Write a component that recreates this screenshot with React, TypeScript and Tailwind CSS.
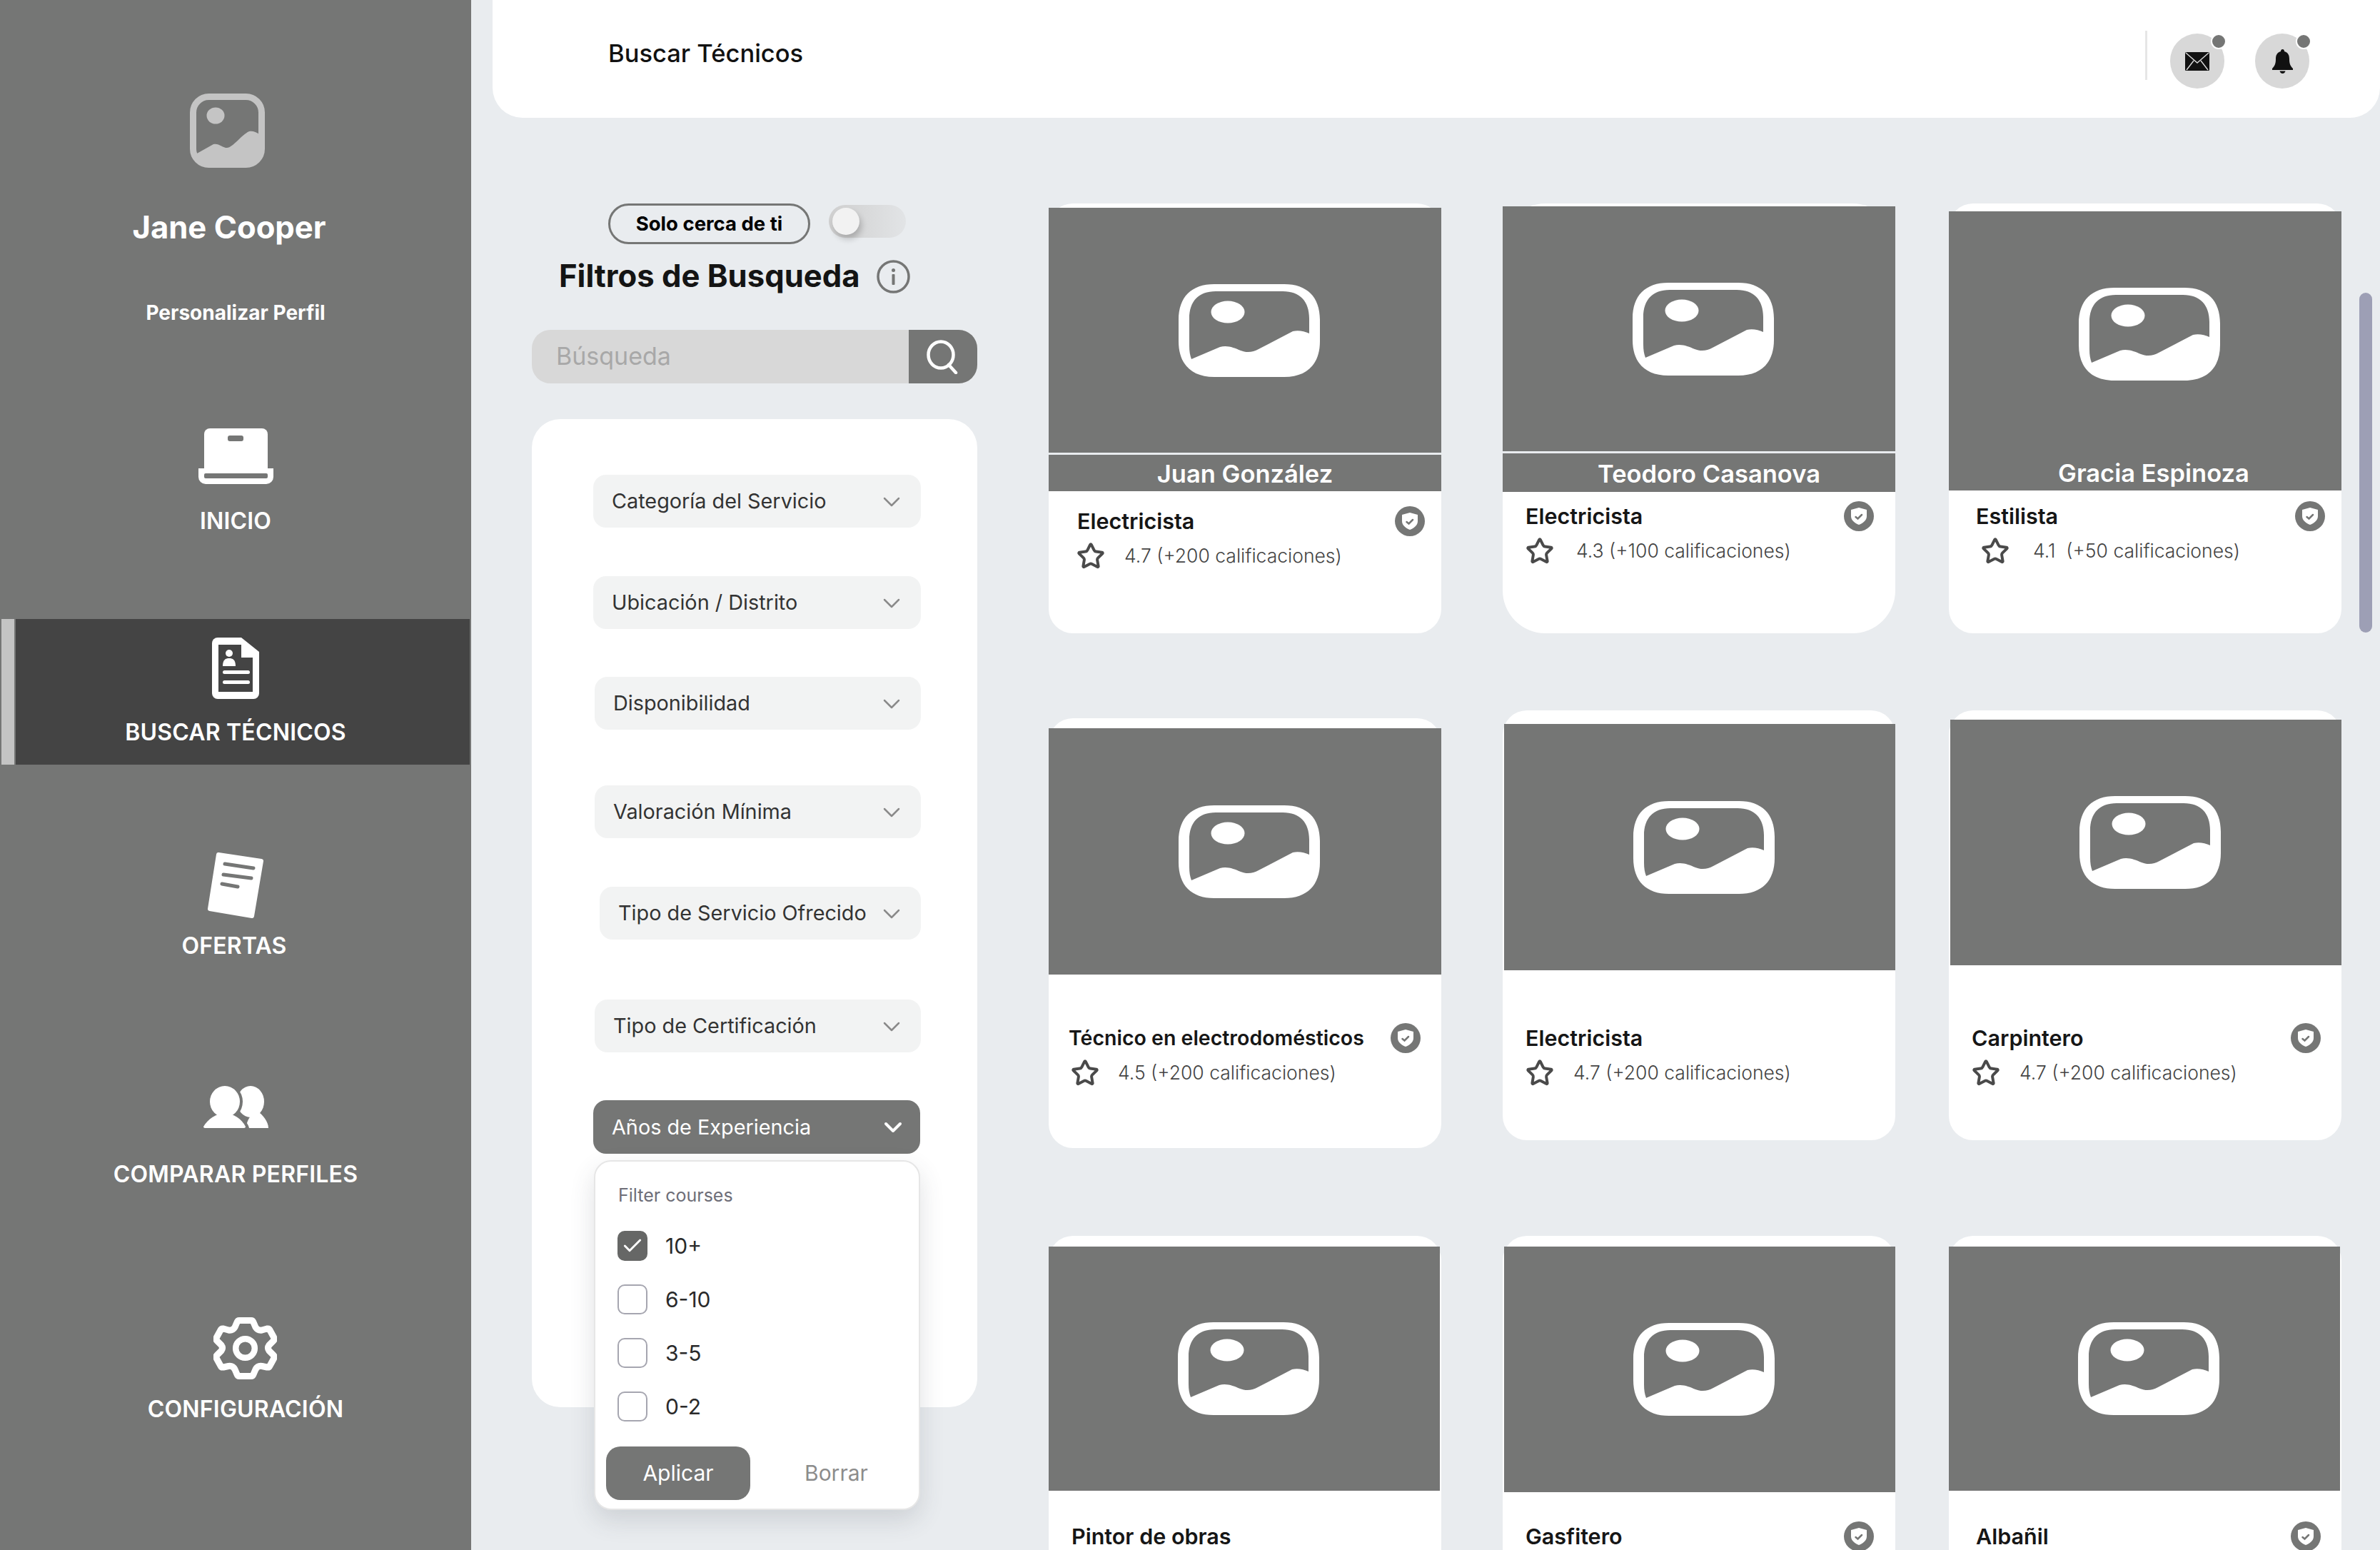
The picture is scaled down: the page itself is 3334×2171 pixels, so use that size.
import { Check, ChevronDown, Star } from "lucide-react";

const FONT = "font-['Inter','Liberation_Sans',sans-serif]";

function PlaceholderIcon() {
  return (
    <svg width="198" height="130" viewBox="0 0 198 130">
      <path
        fillRule="evenodd"
        fill="white"
        d="M50 0 H148 C180 0 198 18 198 50 V80 C198 112 180 130 148 130 H50 C18 130 0 112 0 80 V50 C0 18 18 0 50 0Z M52 10 H146 C170 10 183 24 183 48 V69 C176 66 168 64 160 66 L112 91 C104 96 94 96 87 93 C78 89 68 85 58 88 L18 105 C16 100 15 94 15 86 V48 C15 24 28 10 52 10Z"
      />
      <ellipse cx="69" cy="39" rx="23.5" ry="15.5" fill="white" />
    </svg>
  );
}

function AvatarIcon() {
  return (
    <svg width="105" height="104" viewBox="0 0 105 104" fill="none" className="mr-[23px] mt-[131px]">
      <rect x="4.5" y="4.5" width="96" height="95" rx="22" stroke="#c4c4c4" strokeWidth="9" />
      <ellipse cx="36" cy="31" rx="12.5" ry="11.5" fill="#c4c4c4" />
      <path d="M8 85 L33 71 C40 69 46 76 52 76 C60 76 72 58 83 53 C88 52 93 54 97 57 V96 H8Z" fill="#c4c4c4" />
    </svg>
  );
}

function LaptopIcon() {
  return (
    <svg width="105" height="78" viewBox="0 0 105 78">
      <path d="M16 0 H89 a8 8 0 0 1 8 8 V60 H8 V8 a8 8 0 0 1 8-8Z" fill="white" />
      <rect x="41" y="10" width="22" height="8" rx="3" fill="#757675" />
      <path d="M0 56 H105 V68 a10 10 0 0 1-10 10 H10 A10 10 0 0 1 0 68Z" fill="white" />
      <rect x="8" y="63" width="89" height="7" rx="2" fill="#757675" />
    </svg>
  );
}

function DocIcon() {
  return (
    <svg width="66" height="86" viewBox="0 0 66 86">
      <path d="M8 0 H41 L66 20 V78 a8 8 0 0 1-8 8 H8 a8 8 0 0 1-8-8 V8 a8 8 0 0 1 8-8Z" fill="white" />
      <path d="M9 10 H41 V28 H57 V76 H9Z" fill="#444444" />
      <path d="M44 4 L63 20 V25 H44Z" fill="white" />
      <circle cx="24" cy="22" r="5" fill="white" />
      <path d="M15 40 C15 31 19 29 24 29 C29 29 33 31 33 40Z" fill="white" />
      <rect x="15" y="46" width="38" height="5" rx="2.5" fill="white" />
      <rect x="15" y="60" width="38" height="5" rx="2.5" fill="white" />
    </svg>
  );
}

function OffersIcon() {
  return (
    <svg width="78" height="92" viewBox="0 0 78 92" className="mt-[122px]">
      <path d="M15 3 L75 12 L62 89 L3 79Z" fill="white" stroke="white" strokeWidth="6" strokeLinejoin="round" />
      <path d="M24 16 L64 22 M22 31 L61 36 M20 44 L42 48" stroke="#757675" strokeWidth="5" strokeLinecap="round" />
    </svg>
  );
}

function PeopleIcon() {
  return (
    <svg width="91" height="59" viewBox="0 0 91 59" className="mt-[176px]">
      <ellipse cx="66" cy="22" rx="19" ry="22" fill="white" />
      <path d="M60 59 C60 46 70 36 76 36 C82 39 91 50 91 59Z" fill="white" />
      <ellipse cx="30" cy="22" rx="25" ry="26" fill="#757675" />
      <path d="M-4 59 C2 42 20 34 38 36 C50 38 62 50 64 59Z" fill="#757675" />
      <ellipse cx="30" cy="22" rx="21" ry="22" fill="white" />
      <path d="M0 57 C6 47 18 38 30 38 C42 38 54 47 59 57 C59 58 58 59 57 59 H2 C1 59 0 58 0 57Z" fill="white" />
    </svg>
  );
}

function GearIcon() {
  return (
    <svg width="89" height="87" viewBox="0 0 89 87" fill="none" className="ml-[27px] mt-[180px] shrink-0">
      <path
        stroke="white"
        strokeWidth="9"
        strokeLinejoin="round"
        d="M36 4.5 H53 Q55 4.5 56 7 L59 14 Q62 19 68 18 L75 16 Q78 15.5 79 18 L84.5 28 Q86 31 84 33 L78 39 Q75 43 78 47 L84 53 Q86 55 84.5 58 L79 68 Q78 70.5 75 70 L68 68.5 Q62 67.5 59 73 L56 80 Q55 82.5 53 82.5 H36 Q34 82.5 33 80 L30 73 Q27 67.5 21 68.5 L14 70 Q11 70.5 10 68 L4.5 58 Q3 55 5 53 L11 47 Q14 43 11 39 L5 33 Q3 31 4.5 28 L10 18 Q11 15.5 14 16 L21 18 Q27 19 30 14 L33 7 Q34 4.5 36 4.5Z"
      />
      <circle cx="44.5" cy="43.5" r="13.3" stroke="white" strokeWidth="8.5" />
    </svg>
  );
}

function ShieldBadge() {
  return (
    <span className="flex h-[42px] w-[42px] shrink-0 items-center justify-center rounded-full bg-[#757675]">
      <svg width="22" height="24" viewBox="0 0 22 24">
        <path d="M11 0 L22 3 V12 C22 18 16 22 11 24 C6 22 0 18 0 12 V3Z" fill="white" />
        <path d="M6.5 13 L9.5 15.5 L15 10" fill="none" stroke="#757675" strokeWidth="2.5" strokeLinecap="round" />
      </svg>
    </span>
  );
}

function NavLabel({ children, className = "" }: { children: string; className?: string }) {
  return (
    <span
      className={`pt-[2px] text-[32px] font-semibold leading-[40px] tracking-[0.2px] whitespace-nowrap text-white ${className}`}
    >
      {children}
    </span>
  );
}

function Sidebar() {
  return (
    <aside className="flex h-full w-[660px] shrink-0 flex-col items-center bg-[#757675]">
      <AvatarIcon />
      <h2 className="mr-[18px] mt-[56px] text-[43.6px] font-bold leading-[56px] text-white">Jane Cooper</h2>
      <p className="mt-[71px] text-[28px] font-bold leading-[40px] text-white">Personalizar Perfil</p>
      <div className="mt-[142px]">
        <LaptopIcon />
      </div>
      <NavLabel className="mt-[30px]">INICIO</NavLabel>
      <div className="mt-[116px] flex h-[206px] w-full">
        <div className="my-[1px] ml-[2px] w-[18px] bg-[#c4c4c4]" />
        <div className="mx-[2px] my-[1px] flex flex-1 flex-col items-center bg-[#444444] pr-[20px] pt-[26px]">
          <DocIcon />
          <NavLabel className="mt-[25px]">BUSCAR TÉCNICOS</NavLabel>
        </div>
      </div>
      <OffersIcon />
      <NavLabel className="mr-[4px] mt-[17px]">OFERTAS</NavLabel>
      <PeopleIcon />
      <NavLabel className="mt-[43px]">COMPARAR PERFILES</NavLabel>
      <GearIcon />
      <NavLabel className="ml-[28px] mt-[20px]">CONFIGURACIÓN</NavLabel>
    </aside>
  );
}

function Header() {
  return (
    <header className="ml-[30px] flex h-[165px] justify-between rounded-b-[42px] bg-white pl-[162px] pr-[99px]">
      <h1 className="mt-[50px] text-[34.5px] font-medium leading-[50px] text-[#111111]">Buscar Técnicos</h1>
      <div className="flex items-start pt-[43px]">
        <div className="h-[69px] w-[3px] bg-[#e6e6e6]" />
        <div className="relative ml-[32px] mt-[4px] flex h-[77px] w-[76px] items-center justify-center rounded-full bg-[#d8d8d8]">
          <svg width="34" height="26" viewBox="0 0 34 26">
            <rect width="34" height="26" rx="1.5" fill="#111111" />
            <path d="M1 1 L17 15 L33 1 M2 25 L12 12 M32 25 L22 12" fill="none" stroke="#d8d8d8" strokeWidth="1.4" />
          </svg>
          <span className="absolute left-[57px] top-[0px] h-[22px] w-[22px] rounded-full border-2 border-white bg-[#757675]" />
        </div>
        <div className="relative ml-[43px] mt-[4px] flex h-[77px] w-[76px] items-center justify-center rounded-full bg-[#d8d8d8]">
          <svg width="29" height="34" viewBox="0 0 29 34">
            <path
              d="M14.5 0 C12.5 0 12 1.5 12 3 C6 5 5 9 5 14 C5 19 4 23 0 27 V29 H29 V27 C25 23 24 19 24 14 C24 9 23 5 17 3 C17 1.5 16.5 0 14.5 0Z"
              fill="#111111"
            />
            <path d="M10.5 30.5 H18.5 C18 33 16 34 14.5 34 C13 34 11 33 10.5 30.5Z" fill="#111111" />
          </svg>
          <span className="absolute left-[57px] top-[0px] h-[22px] w-[22px] rounded-full border-2 border-white bg-[#757675]" />
        </div>
      </div>
    </header>
  );
}

function Dropdown({ label, className }: { label: string; className: string }) {
  return (
    <div
      className={`flex h-[74px] shrink-0 items-center justify-between rounded-[18px] bg-[#f2f3f3] pl-[26px] pr-[21px] text-[28.8px] text-[#333333] ${className}`}
    >
      <span>{label}</span>
      <ChevronDown size={40} strokeWidth={1.5} className="mt-[2px] text-[#8a8a8a]" />
    </div>
  );
}

const OPTIONS = [
  { label: "10+", checked: true },
  { label: "6-10", checked: false },
  { label: "3-5", checked: false },
  { label: "0-2", checked: false },
];

function ExperienceMenu() {
  return (
    <div className="absolute left-[87px] top-[1038px] flex h-[490px] w-[457px] flex-col rounded-[24px] border-2 border-[#e6e6e6] bg-white shadow-[0_14px_34px_rgba(60,70,80,0.16)]">
      <p className="ml-[32px] mt-[30px] text-[25px] leading-[34px] text-[#6e6e78]">Filter courses</p>
      <div className="ml-[31px] mt-[33px] flex flex-col gap-[33px]">
        {OPTIONS.map((o) => (
          <label key={o.label} className="flex h-[42px] items-center gap-[25px] text-[30px] text-[#2a2a2a]">
            {o.checked ? (
              <span className="flex h-[42px] w-[42px] items-center justify-center rounded-[10px] bg-[#666766]">
                <Check size={32} strokeWidth={2.2} className="text-white" />
              </span>
            ) : (
              <span className="h-[42px] w-[42px] rounded-[10px] border-2 border-[#a6a6b0] bg-white" />
            )}
            {o.label}
          </label>
        ))}
      </div>
      <div className="ml-[15px] mt-[35px] flex items-center">
        <button className="h-[75px] w-[202px] rounded-[20px] bg-[#757675] text-[30px] text-white">Aplicar</button>
        <span className="ml-[76px] text-[30px] text-[#8c8c8c]">Borrar</span>
      </div>
    </div>
  );
}

function Filters() {
  return (
    <section className="ml-[85px] w-[624px] shrink-0 pt-[120px]">
      <div className="flex items-start pl-[107px]">
        <div className="flex h-[57px] w-[283px] items-center justify-center rounded-full border-[3px] border-[#757675] text-[27.5px] font-bold text-black">
          Solo cerca de ti
        </div>
        <div className="ml-[26px] mt-[2px] flex h-[46px] w-[108px] items-center rounded-full bg-gradient-to-r from-[#cfcfcf] to-[#e2e4e6] pl-[5px]">
          <span className="h-[38px] w-[38px] rounded-full bg-[#f2f2f2] shadow-[3px_6px_8px_rgba(0,0,0,0.2)]" />
        </div>
      </div>
      <div className="ml-[38px] mt-[15px] flex h-[60px] items-center">
        <h2 className="text-[43.6px] font-bold leading-[60px] text-[#141414]">Filtros de Busqueda</h2>
        <svg width="47" height="47" viewBox="0 0 47 47" className="ml-[23px]" fill="none">
          <circle cx="23.5" cy="23.5" r="21.5" stroke="#757675" strokeWidth="3.5" />
          <circle cx="23.5" cy="14.5" r="2.5" fill="#757675" />
          <rect x="21.5" y="20" width="4" height="15" rx="1" fill="#757675" />
        </svg>
      </div>
      <div className="mt-[45px] flex h-[75px] overflow-hidden rounded-[26px] bg-[#d8d8d8]">
        <span className="flex flex-1 items-center pb-[2px] pl-[34px] text-[34px] text-[#a8a8a8]">Búsqueda</span>
        <span className="flex w-[96px] items-center justify-center bg-[#757675]">
          <svg width="44" height="48" viewBox="0 0 44 48" fill="none" className="mr-[3px]">
            <ellipse cx="20" cy="21" rx="17.5" ry="18.5" stroke="white" strokeWidth="4.5" />
            <path d="M31 35 L41 46" stroke="white" strokeWidth="4.5" strokeLinecap="round" />
          </svg>
        </span>
      </div>
      <div className="relative mt-[50px] flex h-[1384px] flex-col rounded-[40px] bg-white pt-[78px]">
        <Dropdown label="Categoría del Servicio" className="ml-[86px] w-[459px]" />
        <Dropdown label="Ubicación / Distrito" className="ml-[86px] mt-[68px] w-[459px]" />
        <Dropdown label="Disponibilidad" className="ml-[88px] mt-[67px] w-[457px]" />
        <Dropdown label="Valoración Mínima" className="ml-[88px] mt-[78px] w-[457px]" />
        <Dropdown label="Tipo de Servicio Ofrecido" className="ml-[95px] mt-[68px] w-[450px]" />
        <Dropdown label="Tipo de Certificación" className="ml-[88px] mt-[84px] w-[457px]" />
        <div className="ml-[86px] mt-[67px] flex h-[75px] w-[458px] shrink-0 items-center justify-between rounded-[18px] bg-[#757675] pl-[26px] pr-[18px] text-[28.8px] text-white">
          <span>Años de Experiencia</span>
          <ChevronDown size={40} strokeWidth={2.4} className="text-white" />
        </div>
        <ExperienceMenu />
      </div>
    </section>
  );
}

interface CardData {
  card: string;
  image: string;
  name?: string;
  band?: string;
  line?: boolean;
  body: string;
  role: string;
  roleSize?: string;
  rating?: string;
  ratingRow?: string;
  badge?: string;
}

const ROW_ONE: CardData[] = [
  {
    card: "rounded-[34px] pt-[6px]",
    image: "h-[343px]",
    line: true,
    name: "Juan González",
    band: "h-[51px] pt-[3px]",
    body: "pl-[40px] pt-[22px]",
    role: "Electricista",
    rating: "4.7 (+200 calificaciones)",
    ratingRow: "-ml-[1px] gap-[27px] -mt-[2px]",
    badge: "pr-[23px]",
  },
  {
    card: "ml-[86px] rounded-[60px] pt-[4px]",
    image: "h-[343px]",
    line: true,
    name: "Teodoro Casanova",
    band: "h-[54px] pl-[28px] pt-[3px]",
    body: "pl-[32px] pt-[14px]",
    role: "Electricista",
    rating: "4.3 (+100 calificaciones)",
    ratingRow: "gap-[31px]",
    badge: "pr-[30px]",
  },
  {
    card: "ml-[75px] rounded-[34px] pt-[11px]",
    image: "h-[343px]",
    name: "Gracia Espinoza",
    band: "h-[48px] pl-[24px]",
    body: "pl-[38px] pt-[16px]",
    role: "Estilista",
    rating: "4.1  (+50 calificaciones)",
    ratingRow: "ml-[7px] gap-[33px] -mt-[1px]",
    badge: "pr-[23px]",
  },
];

const ROW_TWO: CardData[] = [
  {
    card: "mt-[11px] rounded-[34px] pt-[14px]",
    image: "h-[345px]",
    body: "pl-[28px] pt-[69px]",
    role: "Técnico en electrodomésticos",
    roleSize: "text-[28.5px]",
    rating: "4.5 (+200 calificaciones)",
    ratingRow: "ml-[3px] gap-[26px]",
    badge: "pr-[29px]",
  },
  {
    card: "ml-[86px] rounded-[34px] pt-[19px]",
    image: "ml-[2px] h-[345px]",
    body: "pl-[32px] pt-[75px]",
    role: "Electricista",
    rating: "4.7 (+200 calificaciones)",
    ratingRow: "gap-[27px]",
  },
  {
    card: "ml-[75px] rounded-[34px] pt-[13px]",
    image: "ml-[2px] h-[344px]",
    body: "pl-[32px] pt-[82px]",
    role: "Carpintero",
    rating: "4.7 (+200 calificaciones)",
    ratingRow: "gap-[27px]",
    badge: "pr-[29px]",
  },
];

// the third row runs off the bottom of the page below the role line
const ROW_THREE: CardData[] = [
  {
    card: "rounded-[34px] pt-[15px]",
    image: "mr-[2px] h-[342px]",
    body: "pl-[32px] pt-[44px]",
    role: "Pintor de obras",
  },
  {
    card: "ml-[86px] rounded-[34px] pt-[15px]",
    image: "ml-[2px] h-[344px]",
    body: "pl-[32px] pt-[42px]",
    role: "Gasfitero",
    badge: "pr-[30px]",
  },
  {
    card: "ml-[75px] rounded-[34px] pt-[15px]",
    image: "mr-[2px] h-[342px]",
    body: "pl-[38px] pt-[44px]",
    role: "Albañil",
    badge: "pr-[29px]",
  },
];

function TechnicianCard({ data }: { data: CardData }) {
  return (
    <article className={`h-[602px] w-[550px] shrink-0 bg-white ${data.card}`}>
      <div className={`flex items-center justify-center bg-[#757675] pl-[12px] ${data.image}`}>
        <PlaceholderIcon />
      </div>
      {data.line && <div className="h-[3px] bg-[#e9ecef]" />}
      {data.name && (
        <div
          className={`flex items-center justify-center bg-[#757675] text-[34.5px] font-semibold text-white ${data.band}`}
        >
          {data.name}
        </div>
      )}
      <div className={data.body}>
        <div className={`flex h-[40px] items-center justify-between ${data.badge ?? ""}`}>
          <span className={`font-semibold text-[#161616] ${data.roleSize ?? "text-[30.5px]"}`}>{data.role}</span>
          {data.badge && <ShieldBadge />}
        </div>
        {data.rating && (
          <div className={`mt-[9px] flex h-[40px] items-center ${data.ratingRow ?? ""}`}>
            <Star size={40} strokeWidth={2.4} className="shrink-0 text-[#4a4a4a]" />
            <span className="whitespace-pre text-[26.5px] font-light text-[#444444]">{data.rating}</span>
          </div>
        )}
      </div>
    </article>
  );
}

function Results() {
  return (
    <section className="ml-[100px] flex-1 pt-[120px]">
      <div className="flex items-start">
        {ROW_ONE.map((c) => (
          <TechnicianCard key={c.name} data={c} />
        ))}
      </div>
      <div className="mt-[108px] flex items-start">
        {ROW_TWO.map((c) => (
          <TechnicianCard key={c.role + c.card} data={c} />
        ))}
      </div>
      <div className="mt-[123px] flex items-start">
        {ROW_THREE.map((c) => (
          <TechnicianCard key={c.role} data={c} />
        ))}
      </div>
    </section>
  );
}

export default function App() {
  return (
    <div className={`relative flex h-[2171px] w-[3334px] overflow-hidden bg-[#e9ecef] ${FONT}`}>
      <Sidebar />
      <main className="min-w-0 flex-1">
        <Header />
        <div className="flex">
          <Filters />
          <Results />
        </div>
      </main>
      <div className="absolute right-[11px] top-[410px] h-[476px] w-[18px] rounded-full bg-[#9d9fb5]" />
    </div>
  );
}
